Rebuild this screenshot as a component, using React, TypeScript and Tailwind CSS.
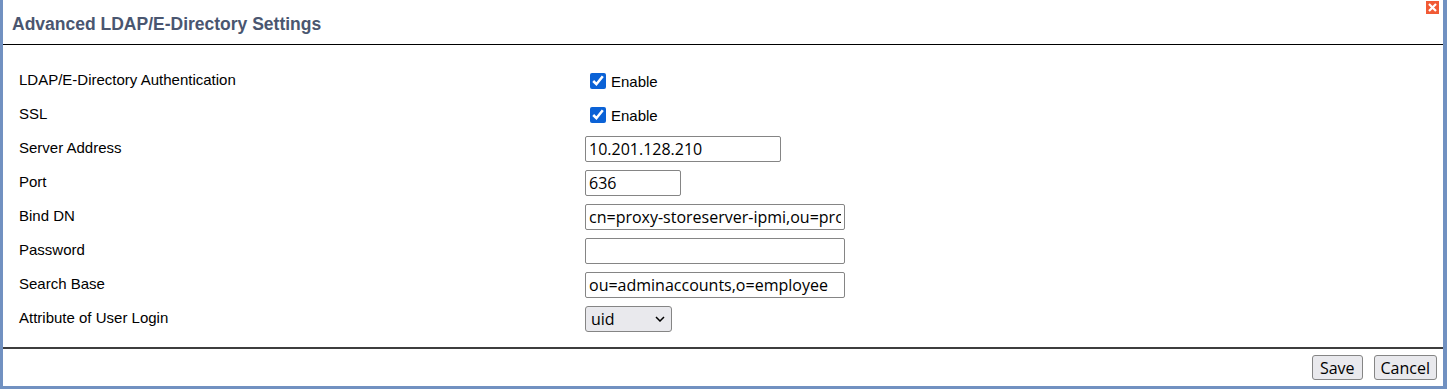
import React from 'react';

const rows: { label: string; kind: string; value?: string; width?: string }[] = [
  { label: 'LDAP/E-Directory Authentication', kind: 'check' },
  { label: 'SSL', kind: 'check' },
  { label: 'Server Address', kind: 'text', value: '10.201.128.210', width: 'w-[196px]' },
  { label: 'Port', kind: 'text', value: '636', width: 'w-[96px]' },
  { label: 'Bind DN', kind: 'text', value: 'cn=proxy-storeserver-ipmi,ou=proxies,o=employee', width: 'w-[260px]' },
  { label: 'Password', kind: 'password', value: '', width: 'w-[260px]' },
  { label: 'Search Base', kind: 'text', value: 'ou=adminaccounts,o=employee', width: 'w-[260px]' },
  { label: 'Attribute of User Login', kind: 'select' },
];

export default function App() {
  return (
    <div className="h-[389px] w-full bg-white flex flex-col border-l-[3px] border-r-[4px] border-b-[3px] border-[#7191c1] font-['Liberation_Sans',Arial,sans-serif]">
      {/* title bar */}
      <div className="h-[45px] flex items-start justify-between border-b-[1.5px] border-black shrink-0">
        <h1 className="pl-[9px] pt-[14px] text-[17.5px] leading-5 font-bold text-[#4a5670]">
          Advanced LDAP/E-Directory Settings
        </h1>
        <div className="mt-[1px] mr-[4px] w-[13px] h-[13px] bg-[#f15a35] flex items-center justify-center">
          <svg width="9" height="9" viewBox="0 0 9 9">
            <path d="M1 1 L8 8 M8 1 L1 8" stroke="white" strokeWidth="2.2" />
          </svg>
        </div>
      </div>

      {/* form */}
      <div className="flex-1 pt-[19px] pl-[16px]">
        {rows.map((r) => (
          <div key={r.label} className="h-[34px] flex items-center">
            <div className="w-[566px] text-[15px] text-black -mt-[2px]">{r.label}</div>
            {r.kind === 'check' && (
              <label className="flex items-center ml-[5px] text-[15px] text-black gap-[5px]">
                <input type="checkbox" defaultChecked className="w-4 h-4 accent-[#0b62d6] m-0" />
                <span className="mt-[2px]">Enable</span>
              </label>
            )}
            {(r.kind === 'text' || r.kind === 'password') && (
              <input
                type={r.kind}
                defaultValue={r.value}
                className={`${r.width} h-[26px] border border-[#858585] rounded-[2px] px-[3px] text-[16px] text-black bg-white outline-none font-['Open_Sans',Arial,sans-serif]`}
              />
            )}
            {r.kind === 'select' && (
              <div className="w-[87px] h-[26px] border border-[#858585] rounded-[3px] bg-[#e9e9ed] flex items-center justify-between px-[5px] text-[16px] text-black font-['Open_Sans',Arial,sans-serif]">
                <span>uid</span>
                <svg width="10" height="6" viewBox="0 0 10 6" className="mr-[1px]">
                  <path d="M1 1 L5 5 L9 1" stroke="black" strokeWidth="1.5" fill="none" />
                </svg>
              </div>
            )}
          </div>
        ))}
      </div>

      {/* footer */}
      <div className="h-[39px] border-t-2 border-[#3d3d3d] flex items-center justify-end gap-[11px] pr-[6px] shrink-0">
        <button className="h-[25px] px-[7px] border border-[#858585] rounded-[3px] bg-[#e9e9ed] text-[16px] text-black font-['Open_Sans',Arial,sans-serif] leading-none">
          Save
        </button>
        <button className="h-[25px] px-[6px] border border-[#858585] rounded-[3px] bg-[#e9e9ed] text-[16px] text-black font-['Open_Sans',Arial,sans-serif] leading-none">
          Cancel
        </button>
      </div>
    </div>
  );
}
